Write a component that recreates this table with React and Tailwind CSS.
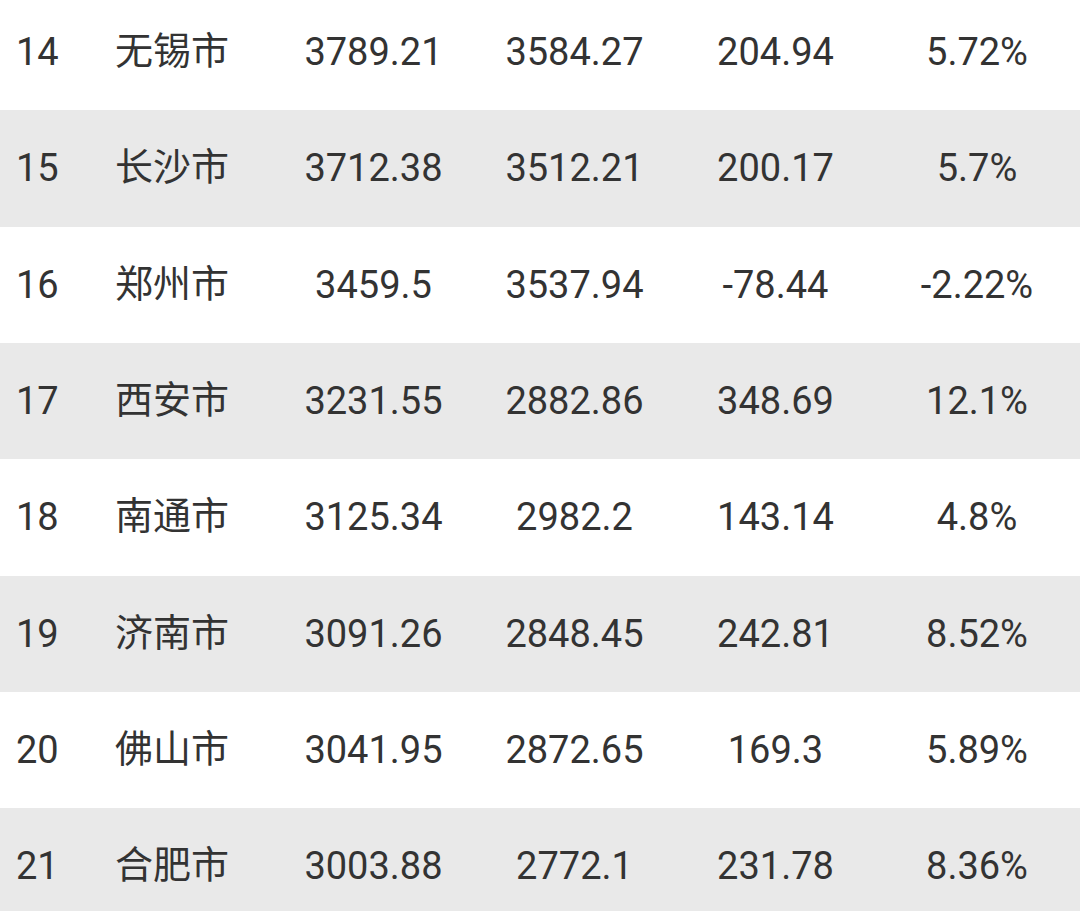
const rows = [
  ['14', '无锡市', '3789.21', '3584.27', '204.94', '5.72%'],
  ['15', '长沙市', '3712.38', '3512.21', '200.17', '5.7%'],
  ['16', '郑州市', '3459.5', '3537.94', '-78.44', '-2.22%'],
  ['17', '西安市', '3231.55', '2882.86', '348.69', '12.1%'],
  ['18', '南通市', '3125.34', '2982.2', '143.14', '4.8%'],
  ['19', '济南市', '3091.26', '2848.45', '242.81', '8.52%'],
  ['20', '佛山市', '3041.95', '2872.65', '169.3', '5.89%'],
  ['21', '合肥市', '3003.88', '2772.1', '231.78', '8.36%'],
];

const App = () => {
  return (
    <div
      className="w-[1080px] h-[911px] overflow-hidden bg-white text-[#333333]"
      style={{ fontFamily: 'Roboto, "Noto Sans CJK SC", sans-serif' }}
    >
      <div className="-mt-[6px]">
        {rows.map((r, i) => (
          <div
            key={r[0]}
            className={`grid grid-cols-[115px_158px_201px_201px_201px_1fr] items-center h-[116.33px] text-[38px] leading-none ${
              i % 2 === 1 ? 'bg-[#e9e9e9]' : 'bg-white'
            }`}
          >
            <div className="pl-[16px]">{r[0]}</div>
            <div className="font-['Noto_Sans_CJK_SC',sans-serif] -translate-y-[4px]">{r[1]}</div>
            <div className="text-center">{r[2]}</div>
            <div className="text-center">{r[3]}</div>
            <div className="text-center">{r[4]}</div>
            <div className="text-center pr-[2px]">{r[5]}</div>
          </div>
        ))}
      </div>
    </div>
  );
};

export default App;
